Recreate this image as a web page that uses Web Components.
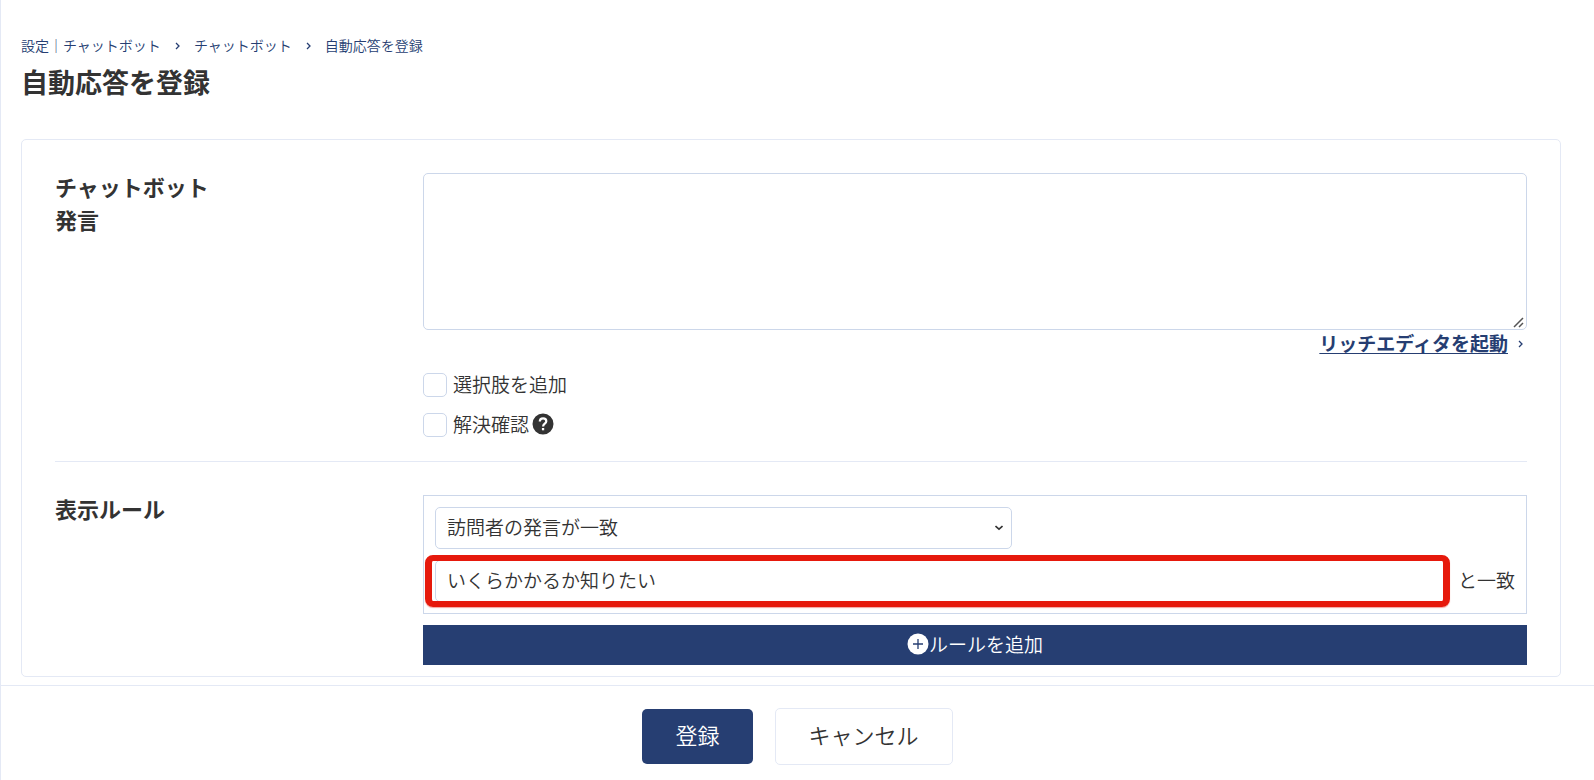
<!DOCTYPE html>
<html lang="ja">
<head>
<meta charset="utf-8">
<meta name="viewport" content="width=device-width, initial-scale=1">
<title>自動応答を登録</title>
<style>
  html {
    --navy: #263e72;
    --ink: #333;
    --line: #e4e9f5;
    --field: #ccd7ea;
  }
  body {
    margin: 0;
    background: #fff;
    color: var(--ink);
    font: 350 19px/28px "Noto Sans CJK JP", "Noto Sans", sans-serif;
  }
</style>
</head>
<body>
<auto-reply-page></auto-reply-page>

<script>
  const define = (name, html) => {
    const template = document.createElement('template');
    template.innerHTML = html;
    customElements.define(name, class extends HTMLElement {
      constructor() {
        super();
        this.attachShadow({ mode: 'open' }).append(template.content.cloneNode(true));
      }
    });
  };

  define('crumb-trail', `
    <style>
      :host { display: block; font-size: 14px; line-height: 20px; }
      nav { display: flex; align-items: center; gap: 14px; }
      ::slotted(a) { color: var(--navy); text-decoration: none; }
      svg { width: 5px; height: 8px; margin-top: 1px; fill: none; stroke: var(--navy); stroke-width: 1.3; }
    </style>
    <nav aria-label="パンくずリスト">
      <slot name="root"></slot>
      <svg viewBox="0 0 5 8" aria-hidden="true"><path d="M1 1l3 3-3 3"/></svg>
      <slot name="parent"></slot>
      <svg viewBox="0 0 5 8" aria-hidden="true"><path d="M1 1l3 3-3 3"/></svg>
      <slot name="current"></slot>
    </nav>`);

  define('form-card', `
    <style>
      :host { display: block; border: 1px solid var(--line); border-radius: 5px; padding: 33px 33px 11px; }
    </style>
    <slot></slot>`);

  define('form-row', `
    <style>
      :host { display: grid; grid-template-columns: 1fr 3fr; }
      .title { font-size: 22px; line-height: 33px; font-weight: 700; margin-top: -3px; }
      .body { min-width: 0; }
    </style>
    <div class="title"><slot name="title"></slot></div>
    <div class="body"><slot></slot></div>`);

  define('check-option', `
    <style>
      :host { display: flex; align-items: center; height: 40px; }
      label { display: flex; align-items: center; gap: 6px; }
      span { padding-bottom: 3px; }
      input { appearance: none; width: 24px; height: 24px; margin: 0; border: 1px solid var(--field); border-radius: 5px; background: #fff; }
      input:checked { background: var(--navy); }
    </style>
    <label><input type="checkbox"><span><slot></slot></span></label>
    <slot name="help"></slot>`);

  define('help-icon', `
    <style>
      :host { display: flex; margin-left: 3px; padding-bottom: 3px; }
      button { display: flex; padding: 0; border: 0; background: none; }
      svg { width: 22px; height: 22px; }
    </style>
    <button type="button" aria-label="ヘルプ">
      <svg viewBox="1 1 22 22" aria-hidden="true"><path fill="#333" d="M12 1.500a10.500 10.500 0 1 0 0 21 10.500 10.500 0 0 0 0-21z"/><path fill="none" stroke="#fff" stroke-width="2.200" d="M8.800 9.500c0-2 1.400-3.200 3.300-3.200s3.200 1.200 3.200 2.900c0 2.500-3.200 2.500-3.200 5.200"/><path fill="#fff" d="M10.900 16h2.300v2.300h-2.300z"/></svg>
    </button>`);

  define('rule-box', `
    <style>
      :host { display: grid; gap: 11px; padding: 11px; border: 1px solid var(--field); }
      .pick { position: relative; max-width: 577px; }
      select, input {
        box-sizing: border-box; width: 100%; height: 42px; margin: 0; padding: 0 11px 3px; display: block;
        border: 1px solid var(--field); border-radius: 5px; background: #fff;
        color: inherit; font: inherit; appearance: none;
      }
      .pick svg { position: absolute; right: 9px; top: 18px; width: 8px; height: 6px; fill: none; stroke: var(--ink); stroke-width: 1.6; pointer-events: none; }
      .match { display: flex; align-items: center; gap: 11px; }
      label { padding-bottom: 3px; }
      .mark { position: relative; flex: 1; }
      .mark::after {
        content: ""; position: absolute; inset: -5px -3px -5px -10px; pointer-events: none;
        border: solid #e6190c; border-width: 6px 7px; border-radius: 8px;
        box-shadow: 0 1px 1px #e6190c66;
      }
    </style>
    <div class="pick">
      <select aria-label="条件"><option>訪問者の発言が一致</option></select>
      <svg viewBox="0 0 8 6" aria-hidden="true"><path d="M0.500 1L4 4.200 7.500 1"/></svg>
    </div>
    <div class="match">
      <div class="mark"><input id="word" type="text" value="いくらかかるか知りたい"></div>
      <label for="word">と一致</label>
    </div>`);

  define('add-button', `
    <style>
      :host { display: block; margin-top: 11px; }
      button {
        display: flex; align-items: center; justify-content: center; width: 100%; height: 40px;
        padding: 0 0 2px; border: 0; background: var(--navy); color: #fff; font: inherit;
      }
      svg { width: 22px; height: 22px; }
    </style>
    <button type="button">
      <svg viewBox="0 0 22 22" aria-hidden="true"><circle cx="11" cy="11" r="10.500" fill="#fff"/><path d="M6 11h10M11 6v10" stroke="#263e72" stroke-width="1.300"/></svg>
      <slot></slot>
    </button>`);

  define('push-button', `
    <style>
      :host { display: block; }
      button {
        display: block; padding: 9px 33px 13px; border: 1px solid var(--line); border-radius: 5px;
        background: #fff; color: inherit; font: inherit; font-size: 22px; line-height: 33px;
      }
      :host([primary]) button { border: 0; background: var(--navy); color: #fff; }
    </style>
    <button type="button"><slot></slot></button>`);

  define('action-bar', `
    <style>
      :host { display: flex; align-items: center; justify-content: center; gap: 22px; padding: 22px; border-top: 1px solid var(--line); background: #fff; }
    </style>
    <slot></slot>`);

  define('auto-reply-page', `
    <style>
      :host { display: block; box-sizing: border-box; min-height: 100vh; border-left: 1px solid var(--line); }
      main { padding: 35px 33px 8px 20px; }
      h1 { margin: 7px 0 37px; font-size: 27px; line-height: 40px; font-weight: 700; }
      textarea {
        box-sizing: border-box; display: block; width: 100%; height: 157px; margin: 0; padding: 11px;
        border: 1px solid var(--field); border-radius: 5px; background: #fff; color: inherit; font: inherit;
      }
      textarea::-webkit-resizer {
        background: url("data:image/svg+xml,%3Csvg xmlns='http://www.w3.org/2000/svg' width='15' height='15'%3E%3Cpath d='M3 13L12 4M8 13l4-4' stroke='%23555' stroke-width='1.500'/%3E%3C/svg%3E") no-repeat right bottom;
      }
      .editor { display: flex; align-items: center; justify-content: flex-end; gap: 10px; height: 28px; padding-right: 4px; margin-bottom: 7px; }
      .editor a { padding-bottom: 2px; color: var(--navy); font-weight: 700; text-underline-offset: 2px; }
      .editor svg { width: 5px; height: 8px; fill: none; stroke: var(--navy); stroke-width: 1.3; }
      hr { margin: 16px 0 33px; border: 0; border-top: 1px solid var(--line); }
    </style>
    <main>
      <crumb-trail>
        <a slot="root" href="#settings">設定｜チャットボット</a>
        <a slot="parent" href="#chatbot">チャットボット</a>
        <a slot="current" href="#register">自動応答を登録</a>
      </crumb-trail>
      <h1>自動応答を登録</h1>
      <form-card>
        <form-row>
          <label slot="title" for="message">チャットボット<br>発言</label>
          <textarea id="message"></textarea>
          <div class="editor">
            <a href="#editor">リッチエディタを起動</a>
            <svg viewBox="0 0 5 8" aria-hidden="true"><path d="M1 1l3 3-3 3"/></svg>
          </div>
          <check-option>選択肢を追加</check-option>
          <check-option>解決確認<help-icon slot="help"></help-icon></check-option>
        </form-row>
        <hr>
        <form-row>
          <span slot="title">表示ルール</span>
          <rule-box></rule-box>
          <add-button>ルールを追加</add-button>
        </form-row>
      </form-card>
    </main>
    <action-bar>
      <push-button primary>登録</push-button>
      <push-button>キャンセル</push-button>
    </action-bar>`);
</script>
</body>
</html>
